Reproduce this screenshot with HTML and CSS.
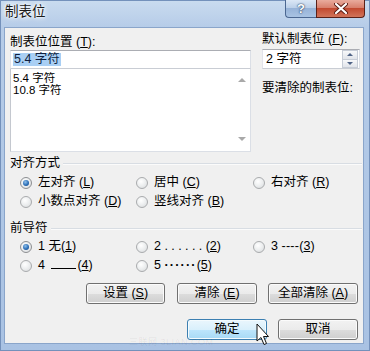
FILE: index.html
```html
<!DOCTYPE html>
<html lang="zh-CN">
<head>
<meta charset="utf-8">
<title>制表位</title>
<link rel="stylesheet" href="styles.css">
</head>
<body>
<div class="window">
  <div class="titlebar">
    <span class="title">制表位</span>
    <div class="caption">
      <span class="cap-help">?</span>
      <span class="cap-close">
        <svg width="14" height="11" viewBox="0 0 14 11"><path d="M2 1 L12 10 M12 1 L2 10" stroke="#5a1b12" stroke-width="4" stroke-linecap="round"/><path d="M2 1 L12 10 M12 1 L2 10" stroke="#fff" stroke-width="2.2" stroke-linecap="round"/></svg>
      </span>
    </div>
  </div>
  <div class="client">
    <div class="top">
      <div class="left-col">
        <div class="lbl">制表位位置 (<u>T</u>):</div>
        <div class="textbox"><span class="sel">5.4 字符</span></div>
        <div class="list">
          <div class="items">
            <div class="item">5.4 字符</div>
            <div class="item">10.8 字符</div>
          </div>
          <div class="vscroll">
            <span class="arr-up"></span>
            <span class="arr-down"></span>
          </div>
        </div>
      </div>
      <div class="right-col">
        <div class="lbl">默认制表位 (<u>F</u>):</div>
        <div class="spin">
          <span class="spin-text">2 字符</span>
          <span class="spin-btns"><span class="sb"><i class="s-up"></i></span><span class="sb"><i class="s-down"></i></span></span>
        </div>
        <div class="lbl clear-lbl">要清除的制表位:</div>
      </div>
    </div>

    <div class="group-head g1"><span>对齐方式</span><span class="rule"></span></div>
    <div class="radios r1">
      <label class="opt"><span class="radio on"></span><span class="t">左对齐 (<u>L</u>)</span></label>
      <label class="opt"><span class="radio"></span><span class="t">居中 (<u>C</u>)</span></label>
      <label class="opt"><span class="radio"></span><span class="t">右对齐 (<u>R</u>)</span></label>
      <label class="opt"><span class="radio"></span><span class="t">小数点对齐 (<u>D</u>)</span></label>
      <label class="opt"><span class="radio"></span><span class="t">竖线对齐 (<u>B</u>)</span></label>
    </div>

    <div class="group-head g2"><span>前导符</span><span class="rule"></span></div>
    <div class="radios r2">
      <label class="opt"><span class="radio on"></span><span class="t">1 无(<u>1</u>)</span></label>
      <label class="opt"><span class="radio"></span><span class="t">2 <span class="dots">......</span>(<u>2</u>)</span></label>
      <label class="opt"><span class="radio"></span><span class="t">3 <span class="dash">----</span>(<u>3</u>)</span></label>
      <label class="opt"><span class="radio"></span><span class="t">4 <span class="under"></span>(<u>4</u>)</span></label>
      <label class="opt"><span class="radio"></span><span class="t">5 <span class="mdots">······</span>(<u>5</u>)</span></label>
    </div>

    <div class="btn-row b1">
      <span class="btn w79">设置 (<u>S</u>)</span>
      <span class="btn w80 gap12">清除 (<u>E</u>)</span>
      <span class="btn w90">全部清除 (<u>A</u>)</span>
    </div>
    <div class="btn-row b2">
      <span class="btn w80 default">确定</span>
      <span class="btn w80">取消</span>
    </div>
  </div>
  <div class="watermark">三联网 3LIAN.COM</div>
  <svg class="cursor" width="14" height="23" viewBox="0 0 14 23"><path d="M1 1 L1 18 L5 14.5 L8 21.5 L10.5 20.5 L7.5 13.5 L12.5 13.5 Z" fill="#fff" stroke="#111" stroke-width="1" stroke-linejoin="round"/></svg>
</div>
</body>
</html>
```
FILE: styles.css
```css
* { box-sizing: border-box; }
html, body { margin: 0; padding: 0; }
body {
  width: 370px;
  height: 351px;
  overflow: hidden;
  font-family: "Liberation Sans", "Noto Sans CJK SC", sans-serif;
  font-size: 12.5px;
  color: #000;
  background: #a9c2e2;
}
u { text-decoration: underline; text-underline-offset: 1px; }

.window {
  position: relative;
  width: 370px;
  height: 351px;
  display: flex;
  flex-direction: column;
  background: linear-gradient(180deg, #c9dbef 0, #b6cce8 26px, #a9c2e3 100%);
  border: 1px solid #7491bb;
  padding: 0 5px 6px 3px;
}

.titlebar {
  height: 26px;
  display: flex;
  align-items: flex-start;
  flex: none;
}
.title {
  padding: 3px 0 0 1px;
  font-size: 13.5px;
  line-height: 16px;
  color: #1a1a1a;
  text-shadow: 0 0 4px #fff, 0 0 6px #fff, 0 0 2px #fff;
}
.caption {
  margin-left: auto;
  margin-top: -1px;
  margin-right: -1px;
  display: flex;
}
.cap-help {
  width: 31px;
  height: 18px;
  border: 1px solid #4b6791;
  border-top: none;
  border-right: none;
  border-radius: 0 0 0 4px;
  background: linear-gradient(180deg, #dbe7f5 0, #bcd0e9 45%, #97b3d8 50%, #a9c3e3 100%);
  color: #fff;
  font-weight: bold;
  font-size: 13px;
  line-height: 17px;
  text-align: center;
  text-shadow: 0 0 2px #243a5e, 0 0 1px #243a5e;
}
.cap-close {
  width: 49px;
  height: 18px;
  border: 1px solid #5a2119;
  border-top: none;
  border-radius: 0 0 4px 0;
  background: linear-gradient(180deg, #e9ab9d 0, #d8806d 45%, #c24a31 50%, #d1745a 100%);
  display: flex;
  align-items: center;
  justify-content: center;
}

.client {
  flex: 1;
  background: #f0f0f0;
  border: 1px solid #8aa5ca;
  padding: 7px 3px 0 5px;
  display: flex;
  flex-direction: column;
}

.lbl { line-height: 15px; height: 15px; white-space: nowrap; }

.top { display: flex; gap: 11px; }
.left-col { width: 241px; display: flex; flex-direction: column; }
.right-col { width: 98px; margin-top: -3px; display: flex; flex-direction: column; }

.textbox {
  height: 19px;
  background: #fff;
  border: 1px solid;
  border-color: #abadb3 #dbdfe6 #c9cdd4 #e2e3ea;
  padding: 2px 0 0 2px;
}
.sel {
  display: inline-block;
  background: #a9cff4;
  color: #0f1f40;
  line-height: 13px;
  height: 13px;
  padding: 0 1px;
  vertical-align: top;
}

.list {
  height: 83px;
  background: #fff;
  border: 1px solid;
  border-color: #c9cdd4 #dbdfe6 #dbdfe6 #c4c8cf;
  border-top: none;
  display: flex;
}
.items { flex: 1; padding: 3px 0 0 2px; font-size: 11.5px; }
.item { line-height: 12px; height: 12px; }
.vscroll {
  width: 17px;
  display: flex;
  flex-direction: column;
  align-items: center;
  justify-content: space-between;
  padding: 9px 0 10px;
}
.arr-up, .arr-down {
  width: 0; height: 0;
  border-left: 4px solid transparent;
  border-right: 4px solid transparent;
}
.arr-up { border-bottom: 4px solid #a9a9a9; }
.arr-down { border-top: 4px solid #a9a9a9; }

.spin {
  margin-top: 2px;
  height: 20px;
  background: #fff;
  border: 1px solid;
  border-color: #abadb3 #dbdfe6 #c9cdd4 #e2e3ea;
  display: flex;
  align-items: center;
}
.spin-text { padding-left: 3px; line-height: 16px; }
.spin-btns {
  margin-left: auto;
  margin-right: 1px;
  width: 16px;
  height: 18px;
  display: flex;
  flex-direction: column;
}
.sb {
  flex: 1;
  border: 1px solid #c6ccd6;
  background: linear-gradient(180deg, #f7f8fa, #e1e4ea);
  display: flex;
  align-items: center;
  justify-content: center;
}
.sb + .sb { border-top: none; }
.s-up, .s-down {
  width: 0; height: 0;
  border-left: 3px solid transparent;
  border-right: 3px solid transparent;
}
.s-up { border-bottom: 3px solid #4f6386; }
.s-down { border-top: 3px solid #4f6386; }
.clear-lbl { margin-top: 12px; }

.group-head {
  display: flex;
  align-items: center;
  line-height: 15px;
  height: 15px;
  white-space: nowrap;
}
.group-head .rule {
  flex: 1;
  height: 2px;
  margin-left: 3px;
  margin-right: -2px;
  border-top: 1px solid #d8dde3;
  border-bottom: 1px solid #fbfbfb;
}
.g1 { margin-top: 4px; }
.g2 { margin-top: 10px; }

.radios {
  display: grid;
  grid-template-columns: 116px 117px auto;
  grid-auto-rows: 19px;
  padding-left: 10px;
}
.r1 { margin-top: 2px; }
.r2 { margin-top: 1px; }
.opt {
  display: flex;
  align-items: center;
  gap: 6px;
  white-space: nowrap;
  line-height: 15px;
}
.t { white-space: nowrap; }
.radio {
  flex: none;
  width: 12px;
  height: 12px;
  border-radius: 50%;
  border: 1px solid #a9abad;
  background: radial-gradient(circle at 40% 35%, #ffffff 0, #eceeef 50%, #d6d8da 100%);
  position: relative;
}
.radio.on {
  border-color: #8d8f92;
}
.radio.on::after {
  content: "";
  position: absolute;
  left: 2px; top: 2px;
  width: 6px; height: 6px;
  border-radius: 50%;
  background: radial-gradient(circle at 40% 35%, #8fc0ea 0, #2c6fb8 55%, #133f77 100%);
}
.dots { letter-spacing: 3.4px; }
.dash { letter-spacing: 0.3px; }
.under {
  display: inline-block;
  width: 25px;
  height: 11px;
  border-bottom: 1px solid #000;
  margin: 0 1px 0 3px;
  vertical-align: baseline;
}
.mdots { letter-spacing: 1.2px; font-weight: bold; }

.btn-row { display: flex; justify-content: flex-end; margin-right: 2px; }
.b1 { margin-top: 8px; gap: 11px; }
.b2 { margin-top: 15px; gap: 11px; }
.btn {
  height: 21px;
  border: 1px solid #707070;
  border-radius: 3px;
  background: linear-gradient(180deg, #f2f2f2 0, #ebebeb 50%, #dddddd 50%, #cfcfcf 100%);
  box-shadow: inset 0 0 0 1px #fbfbfb;
  text-align: center;
  line-height: 19px;
  white-space: nowrap;
}
.btn.default {
  border-color: #3c7fb1;
  background: linear-gradient(180deg, #eaf6fd 0, #d9f0fc 50%, #bee6fd 50%, #a7d9f5 100%);
  box-shadow: inset 0 0 0 1px #f4fbfe;
}
.w79 { width: 79px; }
.w80 { width: 80px; }
.w90 { width: 90px; }
.gap12 { margin-left: 1px; }

.watermark {
  position: absolute;
  left: 128px;
  top: 336px;
  font-size: 9px;
  line-height: 10px;
  color: rgba(0, 0, 0, 0.07);
  letter-spacing: 0.5px;
}
.cursor {
  position: absolute;
  left: 255px;
  top: 322px;
}
```
